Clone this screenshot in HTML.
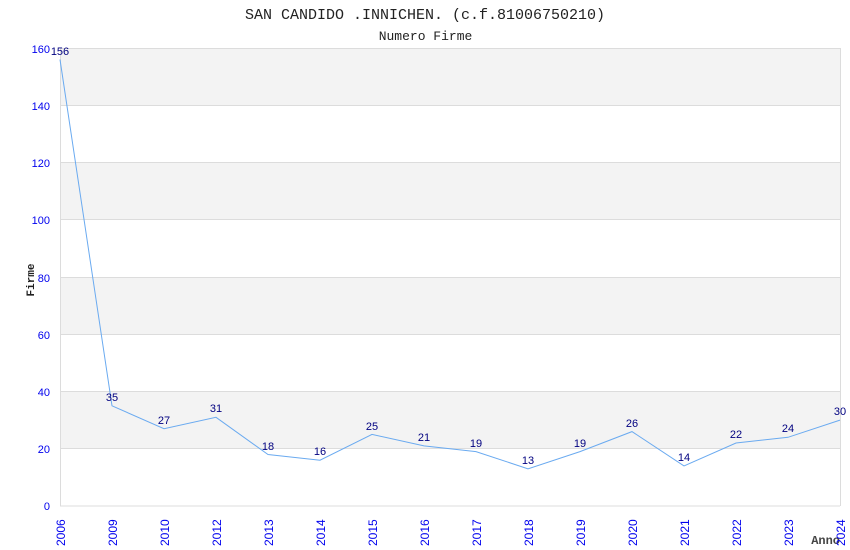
<!DOCTYPE html>
<html><head><meta charset="utf-8"><style>
html,body{margin:0;padding:0;background:#fff;width:850px;height:550px;overflow:hidden}
svg{display:block}
</style></head><body>
<svg width="850" height="550" xmlns="http://www.w3.org/2000/svg">
<rect width="850" height="550" fill="#fff"/>
<text x="425" y="19" text-anchor="middle" font-family="Liberation Mono, monospace" font-size="15" fill="#222">SAN CANDIDO .INNICHEN. (c.f.81006750210)</text>
<text x="425.5" y="40" text-anchor="middle" font-family="Liberation Mono, monospace" font-size="13" fill="#222">Numero Firme</text>
<g fill="#f3f3f3">
<rect x="60" y="48" width="780" height="57.25"/>
<rect x="60" y="162.5" width="780" height="57.25"/>
<rect x="60" y="277" width="780" height="57.25"/>
<rect x="60" y="391.5" width="780" height="57.25"/>
</g>
<g stroke="#dcdcdc" stroke-width="1">
<line x1="60" y1="48.5" x2="840" y2="48.5"/>
<line x1="60" y1="105.5" x2="840" y2="105.5"/>
<line x1="60" y1="162.5" x2="840" y2="162.5"/>
<line x1="60" y1="219.5" x2="840" y2="219.5"/>
<line x1="60" y1="277.5" x2="840" y2="277.5"/>
<line x1="60" y1="334.5" x2="840" y2="334.5"/>
<line x1="60" y1="391.5" x2="840" y2="391.5"/>
<line x1="60" y1="448.5" x2="840" y2="448.5"/>
<line x1="60" y1="506" x2="840" y2="506"/>
<line x1="60.5" y1="48" x2="60.5" y2="506"/>
<line x1="840.5" y1="48" x2="840.5" y2="506"/>
</g>
<g font-family="Liberation Sans, sans-serif" font-size="11" fill="#0000ee" text-anchor="end">
<text x="50" y="53">160</text><text x="50" y="110">140</text><text x="50" y="167">120</text><text x="50" y="224">100</text>
<text x="50" y="282">80</text><text x="50" y="339">60</text><text x="50" y="396">40</text><text x="50" y="453">20</text><text x="50" y="510">0</text>
</g>
<text transform="translate(34,280) rotate(-90)" text-anchor="middle" font-family="Liberation Mono, monospace" font-size="11" font-weight="bold" fill="#222">Firme</text>
<text x="840" y="544" text-anchor="end" font-family="Liberation Mono, monospace" font-size="12" font-weight="bold" fill="#444">Anno</text>
<polyline fill="none" stroke="#6aaaf0" stroke-width="1" points="60,59.5 112,405.8 164,428.7 216,417.3 268,454.5 320,460.2 372,434.4 424,445.9 476,451.6 528,468.8 580,451.6 632,431.6 684,465.9 736,443 788,437.3 840,420.1"/>
<g font-family="Liberation Sans, sans-serif" font-size="11" fill="#000080" text-anchor="middle">
<text x="60" y="55">156</text><text x="112" y="401">35</text><text x="164" y="424">27</text><text x="216" y="412">31</text>
<text x="268" y="450">18</text><text x="320" y="455">16</text><text x="372" y="430">25</text><text x="424" y="441">21</text>
<text x="476" y="447">19</text><text x="528" y="464">13</text><text x="580" y="447">19</text><text x="632" y="427">26</text>
<text x="684" y="461">14</text><text x="736" y="438">22</text><text x="788" y="432">24</text><text x="840" y="415">30</text>
</g>
<g font-family="Liberation Sans, sans-serif" font-size="12" fill="#0000ee" text-anchor="start">
<text transform="translate(65,546) rotate(-90)">2006</text>
<text transform="translate(117,546) rotate(-90)">2009</text>
<text transform="translate(169,546) rotate(-90)">2010</text>
<text transform="translate(221,546) rotate(-90)">2012</text>
<text transform="translate(273,546) rotate(-90)">2013</text>
<text transform="translate(325,546) rotate(-90)">2014</text>
<text transform="translate(377,546) rotate(-90)">2015</text>
<text transform="translate(429,546) rotate(-90)">2016</text>
<text transform="translate(481,546) rotate(-90)">2017</text>
<text transform="translate(533,546) rotate(-90)">2018</text>
<text transform="translate(585,546) rotate(-90)">2019</text>
<text transform="translate(637,546) rotate(-90)">2020</text>
<text transform="translate(689,546) rotate(-90)">2021</text>
<text transform="translate(741,546) rotate(-90)">2022</text>
<text transform="translate(793,546) rotate(-90)">2023</text>
<text transform="translate(845,546) rotate(-90)">2024</text>
</g>
</svg>
</body></html>
